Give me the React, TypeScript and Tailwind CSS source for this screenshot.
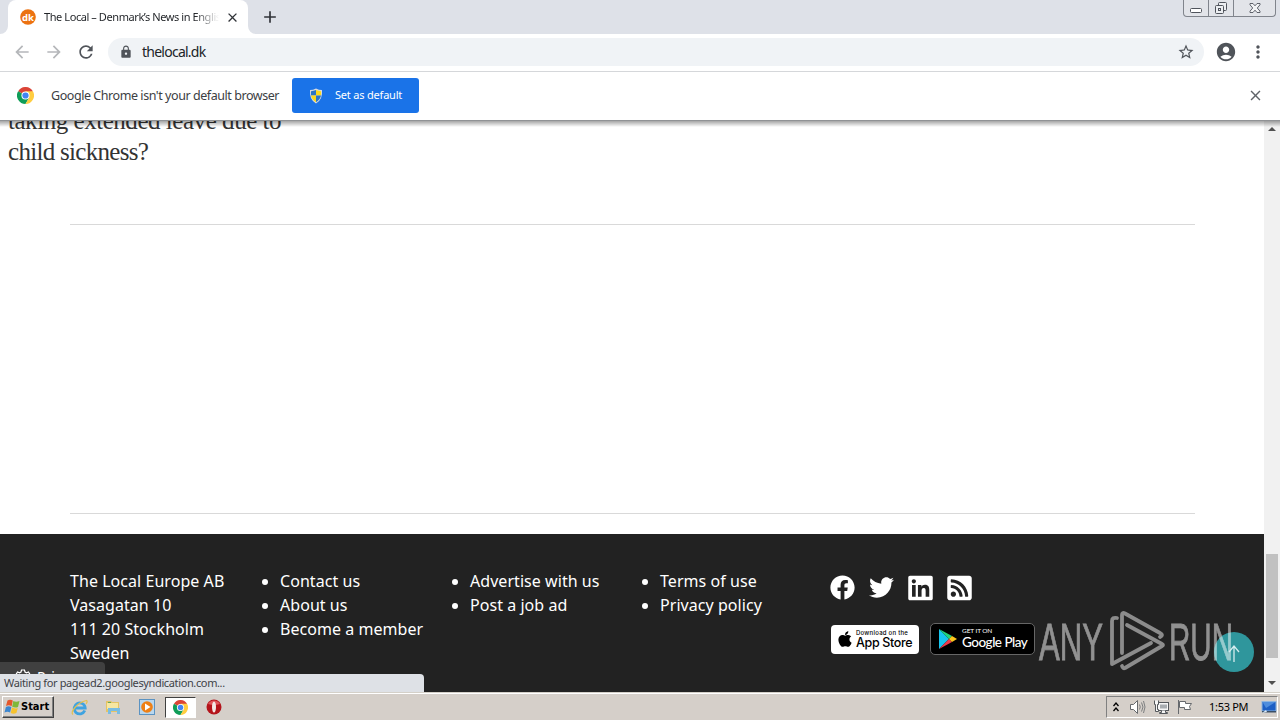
import type { ReactNode } from "react";
import { FaApple, FaFacebook, FaLinkedin, FaRssSquare, FaTwitter } from "react-icons/fa";
import {
  MdAccountCircle,
  MdAdd,
  MdArrowBack,
  MdArrowForward,
  MdClose,
  MdLock,
  MdMoreVert,
  MdRefresh,
  MdStarBorder,
} from "react-icons/md";

const footerColumns = [
  ["Contact us", "About us", "Become a member"],
  ["Advertise with us", "Post a job ad"],
  ["Terms of use", "Privacy policy"],
];

export default function App() {
  return (
    <div className="relative flex h-[720px] w-[1280px] flex-col overflow-hidden bg-white font-['Noto_Sans',sans-serif]">
      <TabStrip />
      <Toolbar />
      <DefaultBrowserBar />
      <div className="relative flex h-[571px] shrink-0">
        <Page />
        <Scrollbar />
        <div className="absolute inset-x-0 top-0 h-1.5 bg-linear-to-b from-black/35 to-transparent" />
        <div className="absolute bottom-[18px] left-0 flex h-[12px] w-[105px] items-start overflow-hidden rounded-tr bg-[#404040] pl-[15px] text-white">
          <SettingsIcon />
          <span className="ml-1.5 mt-[5px] text-[14px] leading-[19px]">Privacy</span>
        </div>
        <div className="absolute bottom-0 left-0 flex h-[18px] w-[424px] items-center rounded-tr bg-[#dee1e6] pl-1 text-[11px] tracking-[-0.37px] text-[#3f4246]">
          Waiting for pagead2.googlesyndication.com...
        </div>
        <Watermark />
      </div>
      <Taskbar />
    </div>
  );
}

function TabStrip() {
  return (
    <div className="flex h-[34px] shrink-0 items-start bg-[#dee1e8]">
      <svg width="8" height="34" className="shrink-0">
        <path d="M8 26v8H0a8 8 0 0 0 8-8Z" fill="#fff" />
      </svg>
      <div className="flex h-[34px] w-[240px] items-center rounded-t-lg bg-white pl-3">
        <svg width="16" height="16" viewBox="0 0 16 16" className="shrink-0">
          <circle cx="8" cy="8" r="7.8" fill="#ec7211" />
          <text x="8" y="11.5" textAnchor="middle" fontSize="9.5" fontWeight="700" fill="#fff">
            dk
          </text>
        </svg>
        <span className="ml-2 w-[175px] overflow-hidden whitespace-nowrap bg-linear-to-r from-[#202327] from-86% to-[#20232700] bg-clip-text text-[11px] leading-4 tracking-[-0.42px] text-transparent">
          The Local – Denmark’s News in English
        </span>
        <MdClose size={15} className="ml-[6px] shrink-0 text-[#303338]" />
      </div>
      <svg width="8" height="34" className="shrink-0">
        <path d="M0 26v8h8a8 8 0 0 1-8-8Z" fill="#fff" />
      </svg>
      <MdAdd size={20} className="ml-1 mt-[7px] text-[#303338]" />
      <div className="ml-auto mr-1 flex h-[17px] w-[93px] rounded-b border border-t-0 border-[#80848c] bg-[#e2e4e9]">
        <div className="flex w-[25px] justify-center border-r border-[#80848c]">
          <svg width="14" height="16" fill="#fff" stroke="#50545c">
            <rect x="1.5" y="8.5" width="11" height="4" rx="1" />
          </svg>
        </div>
        <div className="flex w-[25px] justify-center border-r border-[#80848c]">
          <svg width="14" height="16" fill="#eceef1" stroke="#50545c">
            <rect x="4.5" y="2.5" width="8" height="8" rx="1" />
            <rect x="1.5" y="5.5" width="8" height="8" rx="1" />
            <rect x="4.5" y="8.5" width="2" height="2" />
          </svg>
        </div>
        <div className="flex flex-1 justify-center">
          <svg width="14" height="16" fill="#f2f3f5" stroke="#50545c" strokeWidth="0.9">
            <path d="M2 3.5h3l2 2.3 2-2.3h3v1.3L9.3 8l2.7 3.2v1.3H9L7 10.2 5 12.5H2v-1.3L4.7 8 2 4.8Z" />
          </svg>
        </div>
      </div>
    </div>
  );
}

function Toolbar() {
  return (
    <div className="flex h-[38px] shrink-0 items-center border-b border-[#d5d7da] bg-white pb-0.5 pl-3 text-[#50545a]">
      <MdArrowBack size={20} className="text-[#b5b7ba]" />
      <MdArrowForward size={20} className="ml-3 text-[#b5b7ba]" />
      <MdRefresh size={20} className="ml-3" />
      <div className="ml-3 flex h-7 w-[1096px] items-center rounded-full bg-[#f0f3f6] pl-[11px] pr-[9px]">
        <MdLock size={14} />
        <span className="ml-[9px] text-[14px] leading-5 tracking-[-0.75px] text-[#202327]">
          thelocal.dk
        </span>
        <MdStarBorder size={18} className="ml-auto" />
      </div>
      <MdAccountCircle size={22} className="ml-[11px]" />
      <MdMoreVert size={20} className="ml-[11px]" />
    </div>
  );
}

function DefaultBrowserBar() {
  return (
    <div className="flex h-[49px] shrink-0 items-center border-b border-[#909295] bg-white pb-px pl-[17px] pr-4">
      <ChromeIcon size={17} />
      <span className="ml-[17px] w-[229px] whitespace-nowrap pt-px text-[12.5px] tracking-[-0.44px] text-[#3c4043]">
        Google Chrome isn't your default browser
      </span>
      <button
        type="button"
        className="ml-3 flex h-[35px] w-[127px] items-center rounded-[3px] bg-[#1a73e8] pl-4 text-[11px] text-white"
      >
        <ShieldIcon />
        <span className="ml-[11px] whitespace-nowrap tracking-[-0.2px]">Set as default</span>
      </button>
      <MdClose size={17} className="ml-auto text-[#5f6368]" />
    </div>
  );
}

function Page() {
  return (
    <div className="flex w-[1264px] flex-col overflow-hidden">
      <div className="h-[103px] pl-2">
        <h2 className="-mt-4 w-[300px] whitespace-nowrap font-['Liberation_Serif',serif] text-[25px] leading-[31px] text-[#333]">
          <span className="block tracking-[-0.46px]">taking extended leave due to</span>
          <span className="block tracking-[-0.7px]">child sickness?</span>
        </h2>
      </div>
      <div className="ml-[70px] mr-[69px] h-[290px] border-y border-[#d9d9d9]" />
      <footer className="mt-5 flex flex-1 bg-[#222] pl-[70px] pt-[35px] text-[16px] leading-6 tracking-[0.05px] text-white">
        <address className="w-[190px] not-italic">
          The Local Europe AB
          <br />
          Vasagatan 10
          <br />
          111 20 Stockholm
          <br />
          Sweden
        </address>
        {footerColumns.map((links) => (
          <ul key={links[0]} className="w-[190px] whitespace-nowrap">
            {links.map((link) => (
              <li key={link} className="flex items-center">
                <span className="ml-0.5 mr-3 mt-px size-1.5 rounded-full bg-white" />
                {link}
              </li>
            ))}
          </ul>
        ))}
        <div className="pt-[6px]">
          <div className="flex gap-[14px]">
            <FaFacebook size={25} />
            <FaTwitter size={25} />
            <SquareIcon>
              <FaLinkedin size={28} />
            </SquareIcon>
            <SquareIcon>
              <FaRssSquare size={28} />
            </SquareIcon>
          </div>
          <div className="mt-[23px] flex h-8 items-center">
            <div className="ml-px flex h-[29px] w-[88px] items-center rounded bg-white pl-[5px] text-black">
              <FaApple size={18} />
              <div className="ml-0.5 whitespace-nowrap">
                <div className="font-['Inter',sans-serif] text-[6px] font-medium leading-[7px] tracking-[0.25px]">
                  Download on the
                </div>
                <div className="font-['Inter',sans-serif] text-[12.5px] font-medium leading-[13px] tracking-[-0.35px]">
                  App Store
                </div>
              </div>
            </div>
            <div className="ml-[11px] flex h-8 w-[105px] items-center rounded-[5px] border border-[#666] bg-black pl-[7px]">
              <PlayIcon />
              <div className="-mt-0.5 ml-[5px] whitespace-nowrap">
                <div className="font-['Lato',sans-serif] text-[6.5px] leading-[8px] tracking-[-0.1px]">
                  GET IT ON
                </div>
                <div className="font-['Lato',sans-serif] text-[13.5px] font-medium leading-[14px] tracking-[-0.5px]">
                  Google Play
                </div>
              </div>
            </div>
          </div>
        </div>
      </footer>
    </div>
  );
}

function SquareIcon({ children }: { children: ReactNode }) {
  return <span className="flex size-[25px] items-center justify-center">{children}</span>;
}

function Scrollbar() {
  return (
    <div className="flex w-4 flex-col items-center bg-[#f1f1f1]">
      <svg width="16" height="16">
        <path d="M4 10h8L8 6Z" fill="#505050" />
      </svg>
      <div className="mt-[417px] h-[104px] w-3 bg-[#c1c1c1]" />
      <svg width="16" height="16" className="mt-auto">
        <path d="M4 5h8L8 9Z" fill="#505050" />
      </svg>
    </div>
  );
}

function Watermark() {
  return (
    <>
      <div className="absolute left-[1214px] top-[511px] size-10 rounded-full bg-[#2f969c]" />
      <svg className="absolute left-[1036px] top-[485px]" width="222" height="70">
        <g
          fill="#fff"
          stroke="#fff"
          strokeWidth="0.8"
          opacity="0.5"
          fontFamily="Liberation Sans Narrow, Liberation Sans, sans-serif"
          fontSize="52"
        >
          <text x="3" y="54" textLength="64" lengthAdjust="spacingAndGlyphs">
            ANY
          </text>
          <text x="133" y="54" textLength="64" lengthAdjust="spacingAndGlyphs">
            RUN
          </text>
        </g>
        <g fill="none" stroke="#8c8c8c" strokeWidth="3.8" strokeLinecap="round" strokeLinejoin="round">
          <path d="M81 12q-5-1-5 3v43l39-21" />
          <path d="M86 47V9q0-3 3-1.500l35 19.500q4 2 0 4" />
          <path d="M91 19l35 19q2 1 0 2L89 62q-2 1-3-2" />
        </g>
        <path d="M198 56V40m-5 6 5-6 5 6" fill="none" stroke="#d5ecee" strokeWidth="1.3" />
      </svg>
    </>
  );
}

function Taskbar() {
  return (
    <div className="flex h-7 shrink-0 items-center border-t border-[#d4d0c8] bg-[#d5cfc9] pl-0.5 pt-px shadow-[inset_0_1px_0_#fff]">
      <div className="flex h-[22px] w-[52px] items-center border border-b-[#404040] border-l-white border-r-[#404040] border-t-white pl-px font-['DejaVu_Sans_Condensed','DejaVu_Sans',sans-serif] text-[11px] font-bold text-black shadow-[inset_-1px_-1px_0_#808080]">
        <WindowsIcon />
        <span className="ml-px">Start</span>
      </div>
      <div className="ml-[17px] flex items-center">
        <ExplorerIcon />
        <FolderIcon />
        <MediaIcon />
        <div className="ml-[10px] flex h-[21px] w-[31px] items-center justify-center border border-b-white border-l-[#404040] border-r-white border-t-[#404040] bg-white">
          <ChromeIcon size={15} />
        </div>
        <svg width="16" height="16" viewBox="0 0 16 16" className="ml-[10px]">
          <circle cx="8" cy="8" r="7.5" fill="#b4141b" />
          <path d="M2 5a7 7 0 0 1 12 0Q8 7 2 5Z" fill="#e0555a" />
          <ellipse cx="8" cy="8" rx="2" ry="5.5" fill="#f3e9e6" />
        </svg>
      </div>
      <div className="ml-auto mr-0.5 flex h-[22px] w-[172px] items-center border border-b-white border-l-[#808080] border-r-white border-t-[#808080] pl-[5px] text-[11px] text-black">
        <svg width="8" height="12" fill="none" stroke="#000" strokeWidth="1.3">
          <path d="m1.5 5 2.5-3 2.5 3M1.5 10 4 7l2.5 3" />
        </svg>
        <svg width="17" height="16" viewBox="0 0 17 16" className="ml-[9px]" fill="#fff" stroke="#66696d">
          <path d="M1.5 5.5h3l4-4v13l-4-4h-3Z" />
          <path d="M10.5 5.5q1.5 2.5 0 5M12.5 3.5q3 4.5 0 9M14.5 2q3 6 0 12" fill="none" strokeWidth="0.8" />
        </svg>
        <svg width="17" height="16" viewBox="0 0 17 16" className="ml-[7px]" fill="#f6f6f6" stroke="#55585c">
          <rect x="4.5" y="3.5" width="11" height="8" />
          <path d="M7 5.5h7v4H7Z" fill="#a8acb0" stroke="none" />
          <path d="M8.5 11.5v2h-2v1h8v-1h-2v-2M1.5 1.5v4h1v7h3v-2h-1v-5h1v-4" />
        </svg>
        <svg width="17" height="16" viewBox="0 0 17 16" className="ml-[7px]" fill="#fff" stroke="#66696d">
          <path d="M1.5 1v14M2.5 2.5h6v2h6l-2 3 1 3h-6v-2h-5Z" />
        </svg>
        <span className="ml-[15px] whitespace-nowrap tracking-[-0.3px]">1:53 PM</span>
        <svg width="16" height="14" viewBox="0 0 16 14" className="ml-auto">
          <rect x="1" y="1.5" width="14" height="9.5" fill="#1d5fc4" stroke="#8fb5dd" />
          <path d="M1.5 2h13L5 8Z" fill="#4e8ddd" />
          <path d="M1 11h14v1.5H1Z" fill="#3b4f66" />
          <path d="M1 13l4-3 1 2Z" fill="#d9e8f5" />
        </svg>
      </div>
    </div>
  );
}

function SettingsIcon() {
  return (
    <svg width="16" height="16" viewBox="0 0 16 16" className="mt-[7px] shrink-0" fill="none" stroke="#fff" strokeWidth="1.2">
      <path d="M6 3 6.5 1h3L10 3l1.5.8L13.5 3 15 5.5 13.5 7v2l1.5 1.5-1.5 2.5-2-.8L10 13l-.5 2h-3L6 13l-1.5-.8-2 .8L1 10.5 2.5 9V7L1 5.5 2.5 3l2 .8Z" />
      <circle cx="8" cy="8" r="2.5" />
    </svg>
  );
}

function ChromeIcon({ size }: { size: number }) {
  return (
    <svg width={size} height={size} viewBox="0 0 48 48" className="shrink-0">
      <path d="M24 24 3.2 12a24 24 0 0 1 41.6 0Z" fill="#db4437" />
      <path d="M24 24 3.2 12A24 24 0 0 0 24 48l10.4-18Z" fill="#0f9d58" />
      <path d="M24 24 34.4 30 24 48A24 24 0 0 0 44.8 12H24Z" fill="#ffcd40" />
      <circle cx="24" cy="24" r="11.5" fill="#fff" />
      <circle cx="24" cy="24" r="8.8" fill="#4285f4" />
    </svg>
  );
}

function ShieldIcon() {
  return (
    <svg width="16" height="16" viewBox="0 0 16 16" className="shrink-0">
      <path d="M8 .5q3 1.5 6 1.5 1 9.5-6 13.5Q1 11.5 2 2q3 0 6-1.5Z" fill="#d6dbe0" />
      <path d="M8 2v5.5H3Q2.8 5.5 3 3.2 5.5 3 8 2Z" fill="#2c75c7" />
      <path d="M8 2v5.5h5q.2-2 0-4.3Q10.5 3 8 2Z" fill="#fbd91d" />
      <path d="M3 7.5h5v6.7Q3.8 11.5 3 7.5Z" fill="#fbd91d" />
      <path d="M13 7.5H8v6.7q4.2-2.7 5-6.7Z" fill="#2c75c7" />
    </svg>
  );
}

function PlayIcon() {
  return (
    <svg width="19" height="22" viewBox="0 0 19 22" className="shrink-0">
      <path d="M1 1v20l10-10Z" fill="#16c5ef" />
      <path d="M1 1l10 10 3-3Z" fill="#22d37c" />
      <path d="M1 21l10-10 3 3Z" fill="#ee3b4b" />
      <path d="M14 8l-3 3 3 3 5-3Z" fill="#fbc51c" />
    </svg>
  );
}

function WindowsIcon() {
  return (
    <svg width="16" height="16" viewBox="0 0 16 16" className="shrink-0">
      <path d="M3.5 1.5Q6-.2 8.8 1.5L7.6 7.200Q5 5.500 2 7Z" fill="#e5572a" />
      <path d="M9.300 2Q12 3.500 15.500 2l-1.500 6Q11 9.200 8.200 7.700Z" fill="#7fb83a" />
      <path d="M1.900 7.900q2.900-1.500 5.500.2l-1.300 5.400Q3.500 12 .5 13.500Z" fill="#3c86cf" />
      <path d="M8 8.600q2.900 1.500 5.800.3l-1.400 5.200q-2.900 1.500-5.700 0Z" fill="#f6c22d" />
    </svg>
  );
}

function ExplorerIcon() {
  return (
    <svg width="17" height="17" viewBox="0 0 17 17" className="shrink-0">
      <path d="M13.8 11.5A5.5 5.5 0 1 1 14.2 9H4" fill="none" stroke="#3fa3e0" strokeWidth="2.8" />
      <path d="M2 15.5Q-.5 14 4 8.5T15.5 1.5Q17 2.5 15 5" fill="none" stroke="#e3c04d" strokeWidth="1.2" />
    </svg>
  );
}

function FolderIcon() {
  return (
    <svg width="16" height="16" viewBox="0 0 16 16" className="ml-[17px] shrink-0">
      <path d="M1 2h5l1 1h7v10H1Z" fill="#e4c465" />
      <path d="M2 4h11v6H2Z" fill="#f6e7a2" />
      <path d="M3 3h3v1H3Z" fill="#62a85b" />
      <path d="M3 9h12v6h-3v-3H6v3H3Z" fill="#79bde3" />
    </svg>
  );
}

function MediaIcon() {
  return (
    <svg width="16" height="16" viewBox="0 0 16 16" className="ml-[18px] shrink-0">
      <rect x=".5" y=".5" width="15" height="15" fill="#b9d7ee" stroke="#5b93c2" />
      <circle cx="8" cy="8" r="5.8" fill="#ee8016" />
      <path d="M6 4.5v7L11.5 8Z" fill="#fff" />
    </svg>
  );
}
